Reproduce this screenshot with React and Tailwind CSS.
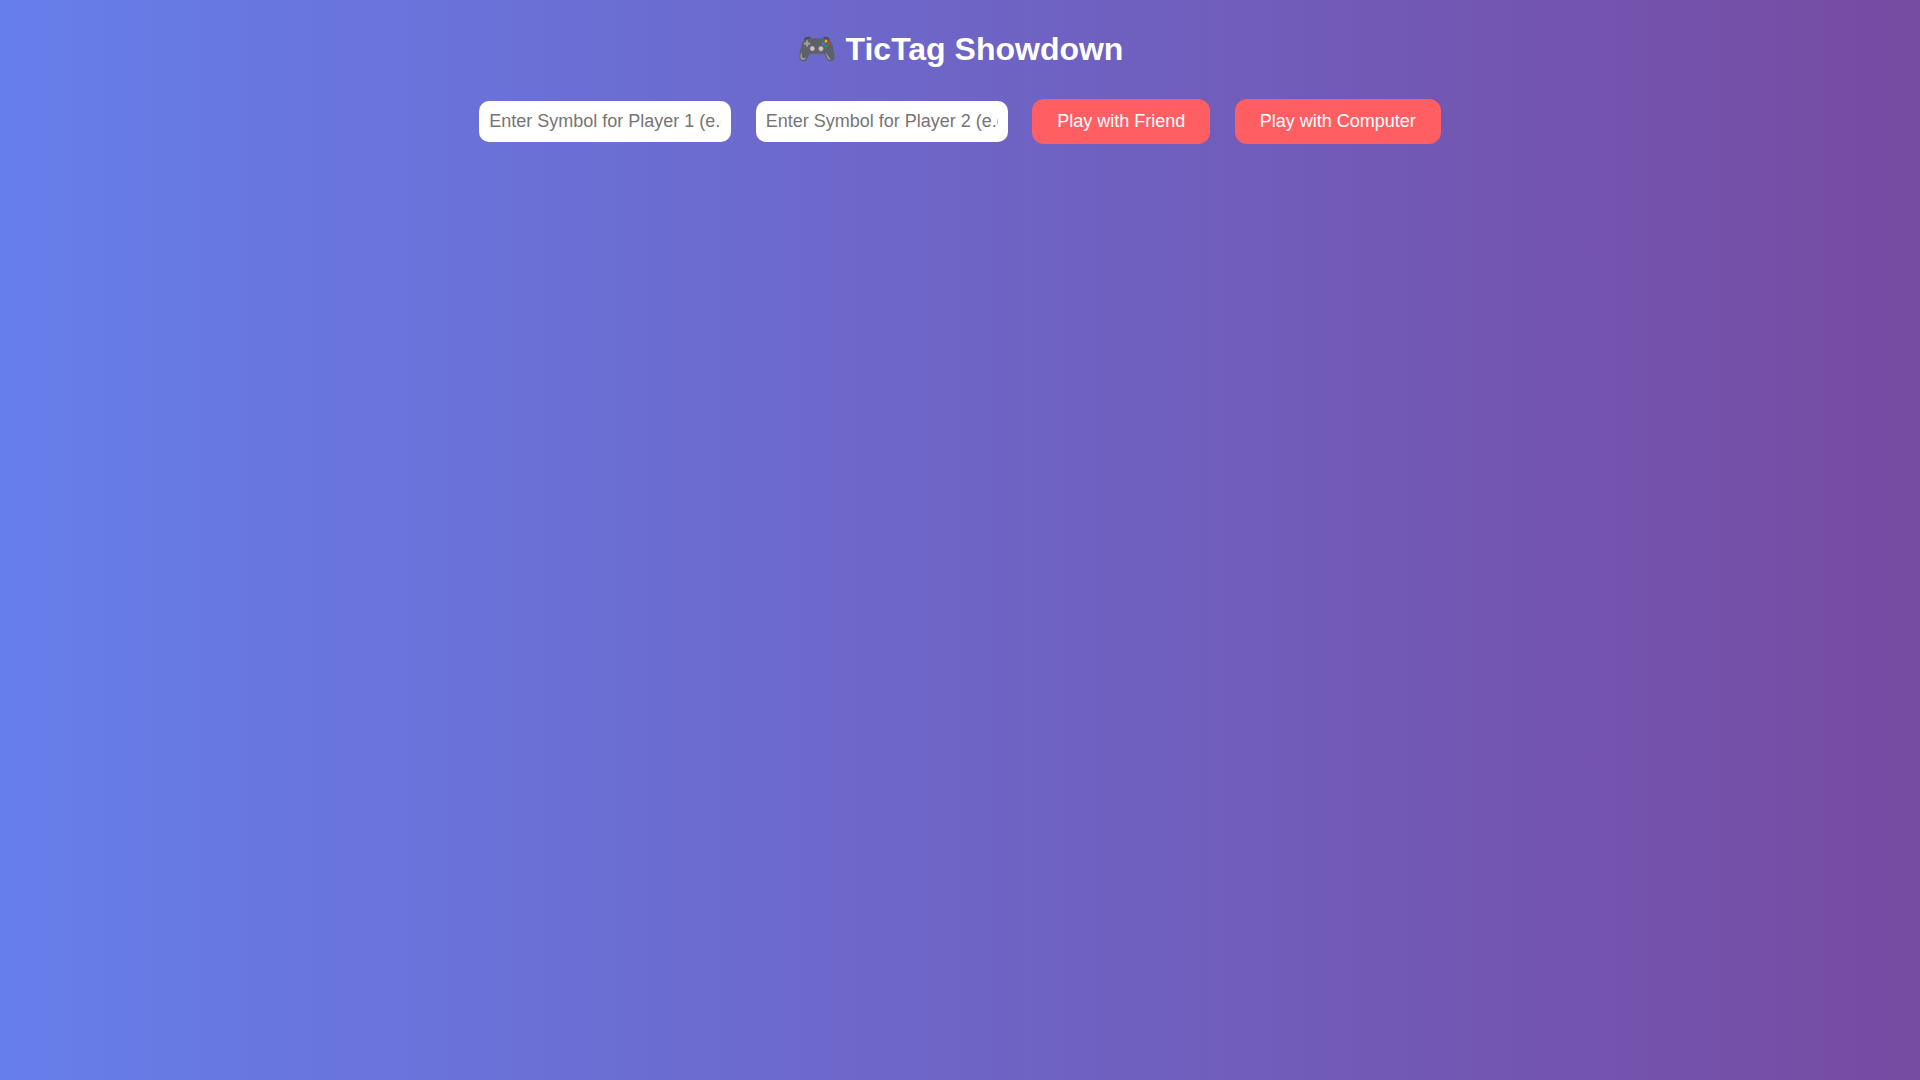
export default function App() {
  const button =
    "m-2.5 cursor-pointer rounded-xl bg-[#ff5e62] px-[25px] py-3 text-lg leading-[21px] text-white hover:bg-[#ff3c41]";
  const input =
    "m-2.5 w-[252px] rounded-[10px] bg-white p-2.5 text-lg leading-[21px] text-black placeholder:text-[#757575]";
  return (
    <main className="flow-root min-h-screen bg-linear-to-r/srgb from-[#667eea] to-[#764ba2] text-center font-['Liberation_Sans',Arial,sans-serif] text-white">
      <h1 className="pt-[31px] text-[32px] leading-[37px] font-bold">🎮 TicTag Showdown</h1>
      <form className="mt-[21px]" onSubmit={(e) => e.preventDefault()}>
        <input className={input} type="text" aria-label="Player 1 symbol" placeholder="Enter Symbol for Player 1 (e.g., X)" />{" "}
        <input className={input} type="text" aria-label="Player 2 symbol" placeholder="Enter Symbol for Player 2 (e.g., O)" />{" "}
        <button className={button} type="button">Play with Friend</button>{" "}
        <button className={button} type="button">Play with Computer</button>
      </form>
    </main>
  );
}
